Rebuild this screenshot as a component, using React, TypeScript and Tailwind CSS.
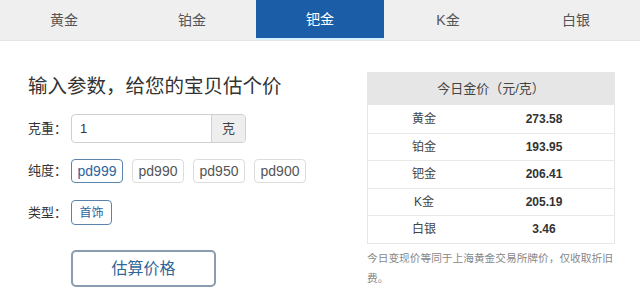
import React from "react";

const tabs = ["黄金", "铂金", "钯金", "K金", "白银"];
const rows = [
  ["黄金", "273.58"],
  ["铂金", "193.95"],
  ["钯金", "206.41"],
  ["K金", "205.19"],
  ["白银", "3.46"],
];
const purities = ["pd999", "pd990", "pd950", "pd900"];

export default function App() {
  return (
    <div
      className="w-[640px] h-[288px] bg-white overflow-hidden text-[#333]"
      style={{ fontFamily: '"Liberation Sans", "Noto Sans CJK SC", sans-serif' }}
    >
      <div className="flex h-[41px] bg-[#efefef] border-b border-[#e4e4e4]">
        {tabs.map((t, i) => (
          <div
            key={t}
            className={
              i === 2
                ? "flex-1 flex items-center justify-center bg-[#1b5da6] text-white text-[14px] border-b-2 border-[#d8f0fb]"
                : "flex-1 flex items-center justify-center text-[#555] text-[14px]"
            }
          >
            {t}
          </div>
        ))}
      </div>

      <div className="flex pl-[28px] pr-[25px] pt-[31px]">
        <div className="flex-1 flex flex-col">
          <div className="text-[19.5px] leading-[28px] text-[#333]">输入参数，给您的宝贝估个价</div>

          <div className="flex items-center mt-[14px] h-[29px]">
            <span className="w-[43px] text-[13px] text-[#333]">克重：</span>
            <div className="flex h-[29px] w-[175px] border border-[#cfcfcf] rounded-[4px] overflow-hidden">
              <div className="flex-1 flex items-center pl-[8px] text-[13px] text-[#333]">1</div>
              <div className="w-[34px] flex items-center justify-center bg-[#eeeeee] border-l border-[#cfcfcf] text-[13px] text-[#444]">
                克
              </div>
            </div>
          </div>

          <div className="flex items-center mt-[16px] h-[24px]">
            <span className="w-[43px] text-[13px] text-[#333]">纯度：</span>
            <div className="flex gap-[9px]">
              {purities.map((p, i) => (
                <div
                  key={p}
                  className={
                    i === 0
                      ? "h-[24px] w-[52px] flex items-center justify-center rounded-[4px] border border-[#5a84ad] text-[#2c64a0] text-[14px]"
                      : "h-[24px] w-[52px] flex items-center justify-center rounded-[4px] border border-[#dcdcdc] text-[#555] text-[14px]"
                  }
                >
                  {p}
                </div>
              ))}
            </div>
          </div>

          <div className="flex items-center mt-[17px] h-[25px]">
            <span className="w-[43px] text-[13px] text-[#333]">类型：</span>
            <div className="h-[25px] w-[41px] flex items-center justify-center rounded-[4px] border border-[#5a84ad] text-[#2c64a0] text-[12px]">
              首饰
            </div>
          </div>

          <div className="mt-[25px] ml-[43px] w-[145px] h-[37px] flex items-center justify-center rounded-[5px] border-2 border-[#8a9caf] text-[#2f6799] text-[16px]">
            估算价格
          </div>
        </div>

        <div className="w-[248px] flex flex-col">
          <div className="h-[33px] bg-[#e6e6e6] flex items-center justify-center text-[13px] text-[#444]">
            今日金价（元/克）
          </div>
          <div className="border-x border-b border-[#e6e6e6]">
            {rows.map(([k, v], i) => (
              <div
                key={k}
                className={
                  i === 0
                    ? "h-[27.5px] flex items-center text-[12px]"
                    : "h-[27.5px] flex items-center text-[12px] border-t border-[#e9e9e9]"
                }
              >
                <div className="w-[112px] text-center text-[#444]">{k}</div>
                <div className="flex-1 text-center font-bold text-[#333] pr-[6px]">{v}</div>
              </div>
            ))}
          </div>
          <div className="mt-[4px] text-[10.7px] leading-[20px] text-[#888]">
            今日变现价等同于上海黄金交易所牌价，仅收取折旧费。
          </div>
        </div>
      </div>
    </div>
  );
}
